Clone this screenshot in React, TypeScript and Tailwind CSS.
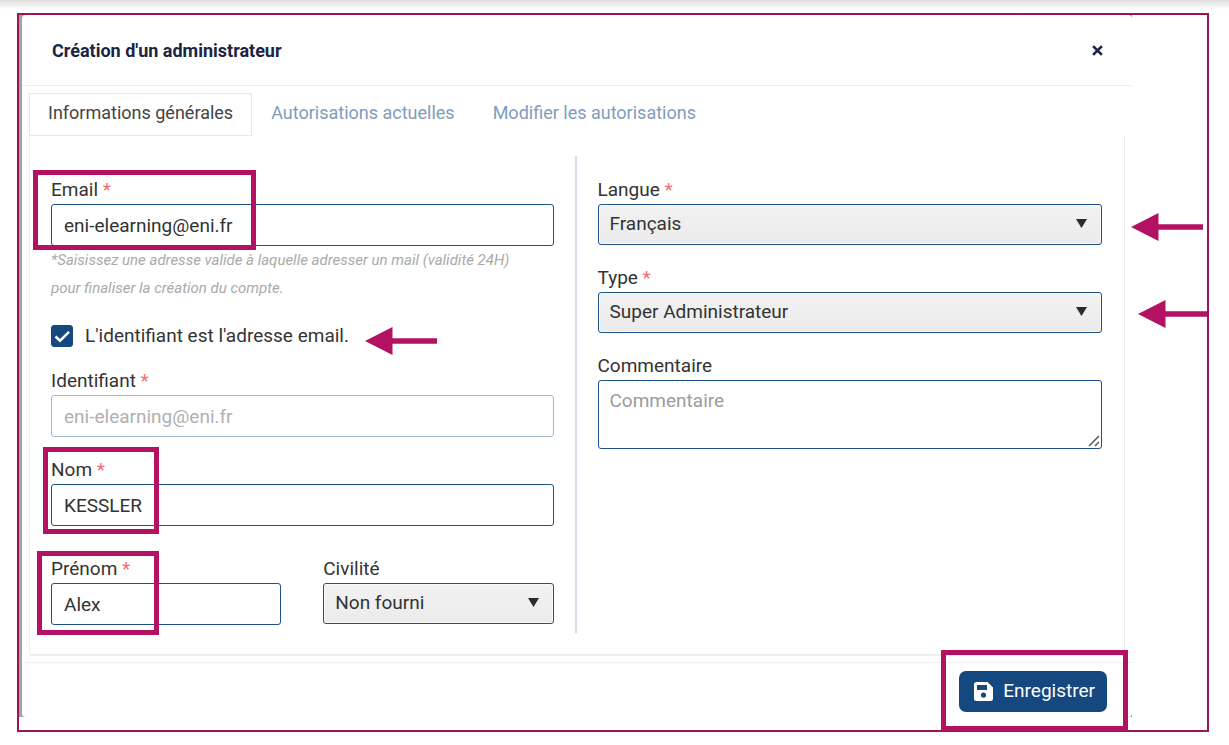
import { useState } from "react";
import type { ReactNode } from "react";

const tabs = ["Informations générales", "Autorisations actuelles", "Modifier les autorisations"];

const inputStyle =
  "block h-[42px] w-full rounded-[3px] border border-[#1d5289] bg-white px-3 text-[#333] outline-none disabled:border-[#a3b9d0] disabled:text-[#b0b0b0]";

function Highlight({ className }: { className: string }) {
  return <span aria-hidden="true" className={`pointer-events-none absolute border-[5px] border-[#b31263] ${className}`} />;
}

function Arrow({ className }: { className: string }) {
  return (
    <svg
      aria-hidden="true"
      viewBox="0 0 72 28"
      preserveAspectRatio="xMinYMid slice"
      className={`pointer-events-none absolute h-7 ${className}`}
      fill="#b31263"
    >
      <path d="M0 14 27.500 0V11.200H72V16.800H27.500V28Z" />
    </svg>
  );
}

function Label({ htmlFor, required, children }: { htmlFor: string; required?: boolean; children: ReactNode }) {
  return (
    <label htmlFor={htmlFor} className="block leading-7">
      {children}
      {required && <span className="text-[#f26d6d]"> *</span>}
    </label>
  );
}

function SelectBox({ id, options }: { id: string; options: string[] }) {
  return (
    <div className="relative">
      <select
        id={id}
        className="block h-[41px] w-full appearance-none rounded-[3px] border border-[#1d5289] bg-linear-to-b from-[#f2f2f2] to-[#ebebeb] pr-10 pl-[11px] text-[#333] shadow-[inset_0_0_0_1px_#fafafa] outline-none"
      >
        {options.map((o) => (
          <option key={o}>{o}</option>
        ))}
      </select>
      <svg
        aria-hidden="true"
        viewBox="0 0 11 9"
        className="pointer-events-none absolute top-[15px] right-[15px] h-[9px] w-[11px]"
        fill="#2b2b2b"
      >
        <path d="M0 0H11L5.500 9Z" />
      </svg>
    </div>
  );
}

export default function App() {
  const [tab, setTab] = useState(0);
  const [email, setEmail] = useState("eni-elearning@eni.fr");
  const [same, setSame] = useState(true);
  const [login, setLogin] = useState("eni-elearning@eni.fr");

  return (
    <div className="bg-white font-[Roboto,sans-serif] text-[19px] text-[#333]">
      <div className="h-[13px] bg-linear-to-b from-[#dedede] to-white to-70%" />
      <main className="mr-5 mb-3 ml-[17px] border-2 border-[#9c1550] pb-[13px]">
        <div className="mr-[75px] bg-[#a3a3a3] pl-[3px]">
          <div className="rounded-[4px] bg-white">
            <header className="flex h-[71px] items-center justify-between border-b border-[#ececf3] pr-[27px] pl-[30px] text-[#1b2444]">
              <h1 className="text-[18px] font-bold">Création d'un administrateur</h1>
              <button type="button" aria-label="Fermer" className="flex size-4 items-center justify-center">
                <svg viewBox="0 0 10 10" className="size-[11px]" stroke="currentColor" strokeWidth="2.400">
                  <path d="M1 1 9 9M9 1 1 9" />
                </svg>
              </button>
            </header>

            <div className="px-[7px] pt-[7px] pb-[6px]">
              <nav role="tablist" className="flex text-[18px]">
                {tabs.map((t, i) => (
                  <button
                    key={t}
                    type="button"
                    role="tab"
                    aria-selected={tab === i}
                    onClick={() => setTab(i)}
                    className={`h-[43px] border px-[18px] pb-1 ${
                      tab === i ? "border-[#e8e8e8] text-[#444]" : "border-transparent text-[#7f9cbd]"
                    }`}
                  >
                    {t}
                  </button>
                ))}
              </nav>

              <form className="grid grid-cols-2 rounded-b-[3px] border-x border-b-2 border-[#ededed] pt-5 pr-[22px] pb-[21px] pl-[21px]">
                <div className="border-r-2 border-[#d9dce6] pt-5 pr-[21px] pb-2">
                  <div className="relative">
                    <Label htmlFor="email" required>Email</Label>
                    <input
                      id="email"
                      type="email"
                      value={email}
                      onChange={(e) => setEmail(e.target.value)}
                      className={inputStyle}
                    />
                    <Highlight className="-top-1.5 -left-[18px] h-20 w-[223px]" />
                  </div>
                  <p className="text-[15px] leading-7 text-[#aaa] italic">
                    *Saisissez une adresse valide à laquelle adresser un mail (validité 24H)
                    <br />
                    pour finaliser la création du compte.
                  </p>

                  <div className="mt-5 flex">
                    <label className="relative flex h-7 items-center gap-3">
                      <input
                        type="checkbox"
                        checked={same}
                        onChange={(e) => setSame(e.target.checked)}
                        className="peer size-[22px] appearance-none rounded-[3px] border border-[#14487f] checked:bg-[#14487f]"
                      />
                      <svg
                        aria-hidden="true"
                        viewBox="0 0 22 22"
                        className="pointer-events-none absolute left-0 hidden size-[22px] peer-checked:block"
                        fill="none"
                        stroke="#fff"
                        strokeWidth="2.600"
                      >
                        <path d="M4.500 11.500 9 15.800 18 6.800" />
                      </svg>
                      L'identifiant est l'adresse email.
                      <Arrow className="top-[5px] left-full ml-4 w-[72px]" />
                    </label>
                  </div>

                  <div className="mt-[17px]">
                    <Label htmlFor="login" required>Identifiant</Label>
                    <input
                      id="login"
                      value={same ? email : login}
                      onChange={(e) => setLogin(e.target.value)}
                      disabled={same}
                      className={inputStyle}
                    />
                  </div>

                  <div className="relative mt-[19px]">
                    <Label htmlFor="nom" required>Nom</Label>
                    <input id="nom" defaultValue="KESSLER" className={inputStyle} />
                    <Highlight className="-top-[9px] -left-2 h-[87px] w-[116px]" />
                  </div>

                  <div className="mt-[29px] grid grid-cols-2 gap-[42px]">
                    <div className="relative">
                      <Label htmlFor="prenom" required>Prénom</Label>
                      <input id="prenom" defaultValue="Alex" className={inputStyle} />
                      <Highlight className="-top-1 -left-3.5 h-[84px] w-[122px]" />
                    </div>
                    <div>
                      <Label htmlFor="civilite">Civilité</Label>
                      <SelectBox id="civilite" options={["Non fourni", "Madame", "Monsieur"]} />
                    </div>
                  </div>
                </div>

                <div className="pt-5 pl-[21px]">
                  <div className="relative">
                    <Label htmlFor="langue" required>Langue</Label>
                    <SelectBox id="langue" options={["Français", "English"]} />
                    <Arrow className="top-[37px] left-full ml-[29px] w-[72px]" />
                  </div>
                  <div className="relative mt-[19px]">
                    <Label htmlFor="type" required>Type</Label>
                    <SelectBox id="type" options={["Super Administrateur", "Administrateur"]} />
                    <Arrow className="top-9 left-full ml-9 w-[69px]" />
                  </div>
                  <div className="relative mt-[19px]">
                    <Label htmlFor="commentaire">Commentaire</Label>
                    <textarea
                      id="commentaire"
                      placeholder="Commentaire"
                      className="block h-[69px] w-full resize-y rounded-[3px] border border-[#1d5289] px-[11px] py-1.5 leading-7 outline-none placeholder:text-[#9c9c9c]"
                    />
                    <svg
                      aria-hidden="true"
                      viewBox="0 0 12 12"
                      className="pointer-events-none absolute right-0.5 bottom-0.5 size-3 bg-white"
                      stroke="#555"
                      strokeWidth="1.500"
                    >
                      <path d="M1 11 11 1M7 11 11 7" />
                    </svg>
                  </div>
                </div>
              </form>
            </div>

            <footer className="flex justify-end border-t border-[#eef1f8] pt-2 pr-[25px] pb-[5px]">
              <div className="relative">
                <button
                  type="button"
                  className="flex h-[41px] items-center gap-2.5 rounded-[7px] bg-[#14487f] pr-3 pl-[15px] text-white"
                >
                  <svg aria-hidden="true" viewBox="0 0 19 19" className="size-[19px]" fill="none">
                    <path
                      fill="#fff"
                      fillRule="evenodd"
                      d="M2.500 0H13.500L19 5.500V16.500A2.500 2.500 0 0 1 16.500 19H2.500A2.500 2.500 0 0 1 0 16.500V2.500A2.500 2.500 0 0 1 2.500 0ZM3 3V8H13V3ZM9.500 10.500A2.600 2.600 0 1 0 9.500 15.700 2.600 2.600 0 0 0 9.500 10.500Z"
                    />
                  </svg>
                  Enregistrer
                </button>
                <Highlight className="-top-[21px] -right-[21px] h-[81px] w-[187px]" />
              </div>
            </footer>
          </div>
        </div>
      </main>
    </div>
  );
}
